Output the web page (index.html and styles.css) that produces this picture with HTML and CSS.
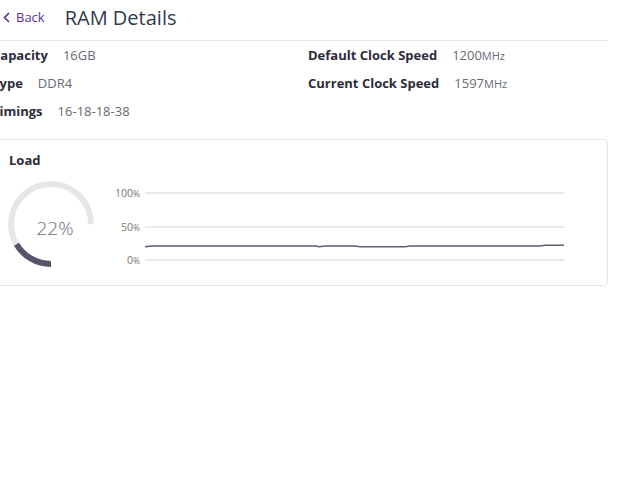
FILE: index.html
```html
<!DOCTYPE html>
<html>
<head>
<meta charset="utf-8">
<link rel="stylesheet" href="styles.css">
</head>
<body>
<div class="page">
  <header class="header">
    <a class="back" href="#">
      <svg class="chev" width="7" height="11" viewBox="0 0 7 11"><polyline points="6,1 1.5,5.5 6,10" fill="none" stroke="#5c2d91" stroke-width="1.6"/></svg>
      <span>Back</span>
    </a>
    <h1 class="title">RAM Details</h1>
  </header>

  <div class="info">
    <div class="col">
      <div class="row"><span class="lbl">Capacity</span><span class="val">16GB</span></div>
      <div class="row"><span class="lbl">Type</span><span class="val">DDR4</span></div>
      <div class="row"><span class="lbl">Timings</span><span class="val">16-18-18-38</span></div>
    </div>
    <div class="col">
      <div class="row"><span class="lbl">Default Clock Speed</span><span class="val">1200<small>MHz</small></span></div>
      <div class="row"><span class="lbl">Current Clock Speed</span><span class="val">1597<small>MHz</small></span></div>
    </div>
  </div>

  <section class="card">
    <h2 class="card-title">Load</h2>
    <div class="card-body">
      <svg class="gauge" width="96" height="96" viewBox="0 0 96 96">
        <circle cx="48" cy="48" r="40" fill="none" stroke="#e4e7ea" stroke-width="6" stroke-dasharray="188.5 251.3" transform="rotate(90 48 48)"/>
        <circle cx="48" cy="48" r="40" fill="none" stroke="#57546a" stroke-width="6" stroke-dasharray="41.5 251.3" transform="rotate(90 48 48)"/>
        <text x="52" y="59" text-anchor="middle" class="gauge-text">22%</text>
      </svg>
      <svg class="chart" width="470" height="96" viewBox="0 0 470 96">
        <line x1="45" y1="17" x2="464" y2="17" stroke="#e8e9eb" stroke-width="2"/>
        <line x1="45" y1="51" x2="464" y2="51" stroke="#e8e9eb" stroke-width="2"/>
        <line x1="45" y1="84" x2="464" y2="84" stroke="#e8e9eb" stroke-width="2"/>
        <text x="40" y="21" text-anchor="end" class="axis">100<tspan class="pct">%</tspan></text>
        <text x="40" y="55" text-anchor="end" class="axis">50<tspan class="pct">%</tspan></text>
        <text x="40" y="88" text-anchor="end" class="axis">0<tspan class="pct">%</tspan></text>
        <polyline fill="none" stroke="#5e5b72" stroke-width="1.6" points="45,70.8 52,70 216,70 219,70.8 225,70 255,70 260,70.8 305,70.8 310,70 440,70 445,69.2 464,69.2"/>
      </svg>
    </div>
  </section>
</div>
</body>
</html>
```
FILE: styles.css
```css
html, body {
  margin: 0;
  padding: 0;
  background: #fff;
  font-family: "Open Sans", "Liberation Sans", sans-serif;
}
.page {
  margin-left: -8px;
  width: 616px;
}
.header {
  display: flex;
  align-items: center;
  height: 34px;
  padding-bottom: 6px;
  border-bottom: 1px solid #e6e6e6;
  padding-left: 11px;
}
.back {
  display: flex;
  align-items: center;
  gap: 6px;
  color: #5c2d91;
  text-decoration: none;
  font-size: 13px;
}
.chev { display: block; }
.title {
  margin: 0 0 0 20px;
  font-size: 20px;
  font-weight: 400;
  color: #2f3a4d;
}
.info {
  display: grid;
  grid-template-columns: 316px 1fr;
}
.row {
  display: flex;
  align-items: center;
  height: 28px;
  gap: 15px;
  font-size: 13px;
}
.lbl {
  font-weight: 700;
  color: #2c2c3a;
}
.val {
  color: #666a72;
}
.val small {
  font-size: 11px;
}
.card {
  margin-top: 14px;
  border: 1px solid #e6e6e6;
  border-radius: 4px;
  padding: 12px 16px 13px 16px;
}
.card-title {
  margin: 0;
  font-size: 13px;
  line-height: 17px;
  font-weight: 700;
  color: #2c2c3a;
}
.card-body {
  display: flex;
  margin-top: 7px;
}
.gauge {
  display: block;
  margin-left: -6px;
}
.gauge-text {
  font-size: 19px;
  font-weight: 300;
  fill: #6b6b78;
}
.chart {
  display: block;
  margin-left: 1px;
}
.axis {
  font-size: 10.5px;
  fill: #7c7474;
}
.axis .pct {
  font-size: 8.5px;
}
```
